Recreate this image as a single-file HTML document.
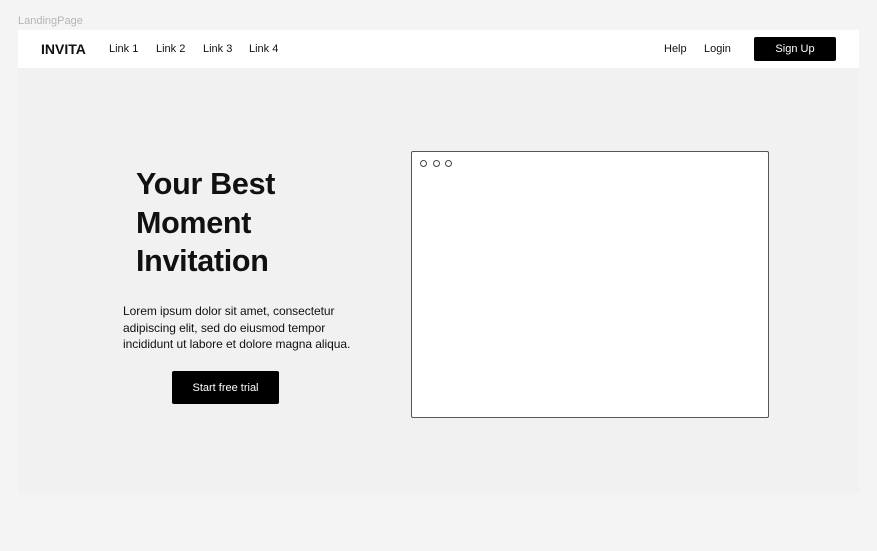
<!DOCTYPE html>
<html><head><style>
*{margin:0;padding:0;box-sizing:border-box}
body{width:877px;height:551px;background:#f4f4f4;font-family:"Liberation Sans",sans-serif;position:relative;overflow:hidden}
.abs{position:absolute}
.lbl{left:18px;top:15px;font-size:11px;color:#b5b5b5}
.frame{left:18px;top:30px;width:841px;height:463px;background:#f1f1f1}
.nav{left:18px;top:30px;width:841px;height:38px;background:#fff;font-size:11px;color:#111}
.nav span{position:absolute;top:13px}
h1{position:absolute;left:136px;top:165px;font-size:30.5px;line-height:38.5px;font-weight:bold;color:#111;letter-spacing:-0.3px}
p{position:absolute;left:123px;top:303px;font-size:12px;line-height:16.5px;color:#111;letter-spacing:-0.05px}
.btn{left:172px;top:371px;width:107px;height:33px;background:#000;color:#fff;border-radius:2px;font-size:11px;text-align:center;line-height:34px}
.box{left:411px;top:151px;width:358px;height:267px;background:#fff;border:1px solid #555;border-radius:2px}
.c{position:absolute;top:8px;width:7px;height:7px;border:1px solid #444;border-radius:50%}
</style></head><body>
<div class="abs lbl">LandingPage</div>
<div class="abs frame"></div>
<div class="abs nav">
<span style="left:23px;top:11px;font-size:14px;font-weight:bold">INVITA</span>
<span style="left:91px">Link 1</span>
<span style="left:138px">Link 2</span>
<span style="left:185px">Link 3</span>
<span style="left:231px">Link 4</span>
<span style="left:646px">Help</span>
<span style="left:686px">Login</span>
<div style="position:absolute;left:736px;top:7px;width:82px;height:24px;background:#000;color:#fff;border-radius:2px;text-align:center;line-height:25px">Sign Up</div>
</div>
<h1>Your Best<br>Moment<br>Invitation</h1>
<p>Lorem ipsum dolor sit amet, consectetur<br>adipiscing elit, sed do eiusmod tempor<br>incididunt ut labore et dolore magna aliqua.</p>
<div class="abs btn">Start free trial</div>
<div class="abs box"><div class="c" style="left:8px"></div><div class="c" style="left:21px"></div><div class="c" style="left:33px"></div></div>
</body></html>
